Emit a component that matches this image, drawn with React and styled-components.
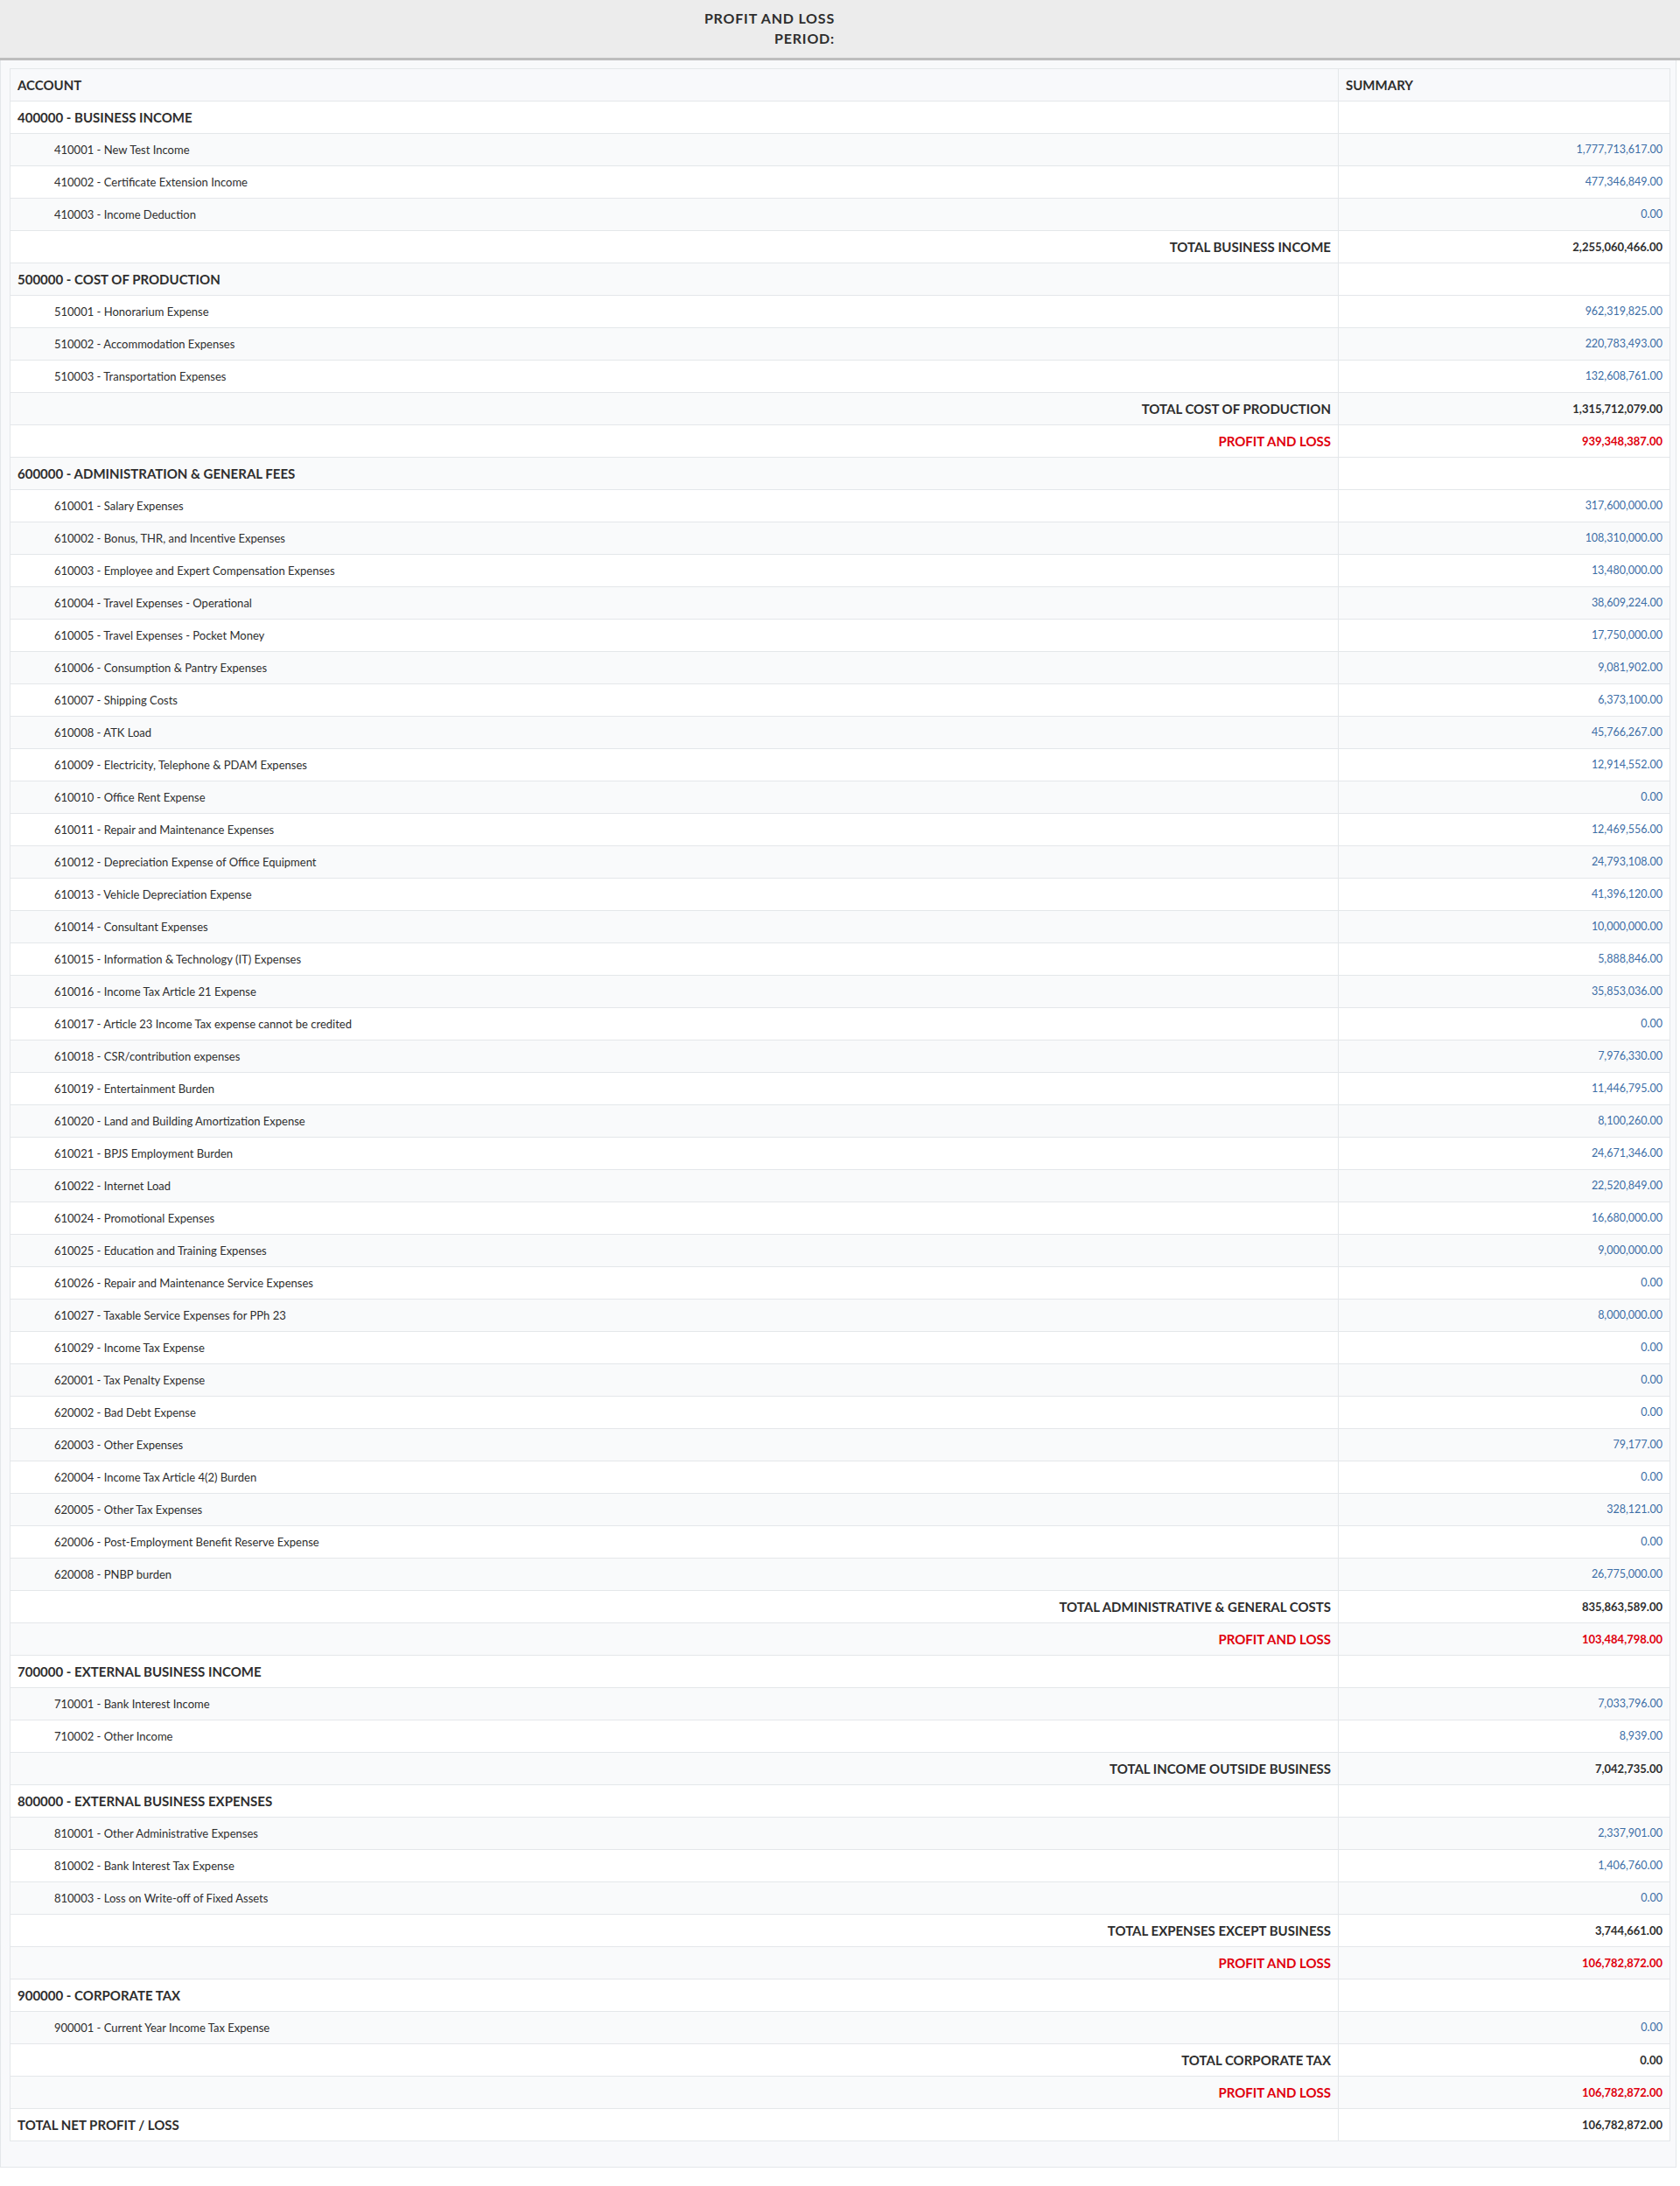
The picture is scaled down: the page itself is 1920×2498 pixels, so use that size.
import React from "react";
import styled, { createGlobalStyle } from "styled-components";

const GlobalStyle = createGlobalStyle`
  body {
    margin: 0;
    background: #ffffff;
    font-family: Lato, "Open Sans", sans-serif;
    color: #2e2e2e;
  }
`;

const TitleBar = styled.header`
  height: 66px;
  background-color: #ececec;
  border-bottom: 3px solid #bdbdbd;
  box-sizing: content-box;
  display: flex;
`;

const TitleBlock = styled.div`
  width: 50%;
  padding: 9px 6px 0 0;
  text-align: right;
  box-sizing: border-box;
`;

const TitleLine = styled.div`
  font-size: 16px;
  font-weight: 700;
  letter-spacing: 0.8px;
  line-height: 23px;
  color: #2e2e2e;
`;

const Panel = styled.section`
  margin-right: 4px;
  padding: 9px 6px 29px 10px;
  background-color: #f8f9fb;
  border: 1px solid #e4e7ea;
  border-top: none;
`;

const Table = styled.table`
  width: 100%;
  border-collapse: collapse;
  table-layout: fixed;
  border: 1px solid #e4e7ea;
`;

const Row = styled.tr`
  background-color: ${({ $striped }) => ($striped ? "#f9fafb" : "#ffffff")};
`;

const HeadRow = styled.tr`
  background-color: #f8f9fb;
`;

const Th = styled.th`
  padding: 8px;
  border: 1px solid #e4e7ea;
  text-align: left;
  font-size: 15px;
  font-weight: 700;
  line-height: 20px;
  color: #2e2e2e;
`;

const LabelCell = styled.td`
  padding: 8px 8px 8px ${({ $indent }) => ($indent ? "50px" : "8px")};
  border: 1px solid #e4e7ea;
  line-height: 20px;
  white-space: nowrap;
  text-align: ${({ $align }) => $align || "left"};
  font-size: ${({ $bold }) => ($bold ? "15px" : "13px")};
  font-weight: ${({ $bold }) => ($bold ? 700 : 400)};
  color: ${({ $red }) => ($red ? "#e0000d" : "#2e2e2e")};
`;

const ValueCell = styled.td`
  padding: 8px;
  border: 1px solid #e4e7ea;
  line-height: 20px;
  text-align: right;
  white-space: nowrap;
  background-color: ${({ $plain }) => ($plain ? "#ffffff" : "transparent")};
  font-size: ${({ $bold }) => ($bold ? "13px" : "12.5px")};
  font-weight: ${({ $bold }) => ($bold ? 700 : 400)};
  color: ${({ $tone }) =>
    $tone === "red" ? "#e0000d" : $tone === "blue" ? "#3d6ea6" : "#2e2e2e"};
`;

// kind: group | item | total | pl | net
const rows = [
  ["group", "400000 - BUSINESS INCOME"],
  ["item", "410001 - New Test Income", "1,777,713,617.00"],
  ["item", "410002 - Certificate Extension Income", "477,346,849.00"],
  ["item", "410003 - Income Deduction", "0.00"],
  ["total", "TOTAL BUSINESS INCOME", "2,255,060,466.00"],
  ["group", "500000 - COST OF PRODUCTION"],
  ["item", "510001 - Honorarium Expense", "962,319,825.00"],
  ["item", "510002 - Accommodation Expenses", "220,783,493.00"],
  ["item", "510003 - Transportation Expenses", "132,608,761.00"],
  ["total", "TOTAL COST OF PRODUCTION", "1,315,712,079.00"],
  ["pl", "PROFIT AND LOSS", "939,348,387.00"],
  ["group", "600000 - ADMINISTRATION & GENERAL FEES"],
  ["item", "610001 - Salary Expenses", "317,600,000.00"],
  ["item", "610002 - Bonus, THR, and Incentive Expenses", "108,310,000.00"],
  ["item", "610003 - Employee and Expert Compensation Expenses", "13,480,000.00"],
  ["item", "610004 - Travel Expenses - Operational", "38,609,224.00"],
  ["item", "610005 - Travel Expenses - Pocket Money", "17,750,000.00"],
  ["item", "610006 - Consumption & Pantry Expenses", "9,081,902.00"],
  ["item", "610007 - Shipping Costs", "6,373,100.00"],
  ["item", "610008 - ATK Load", "45,766,267.00"],
  ["item", "610009 - Electricity, Telephone & PDAM Expenses", "12,914,552.00"],
  ["item", "610010 - Office Rent Expense", "0.00"],
  ["item", "610011 - Repair and Maintenance Expenses", "12,469,556.00"],
  ["item", "610012 - Depreciation Expense of Office Equipment", "24,793,108.00"],
  ["item", "610013 - Vehicle Depreciation Expense", "41,396,120.00"],
  ["item", "610014 - Consultant Expenses", "10,000,000.00"],
  ["item", "610015 - Information & Technology (IT) Expenses", "5,888,846.00"],
  ["item", "610016 - Income Tax Article 21 Expense", "35,853,036.00"],
  ["item", "610017 - Article 23 Income Tax expense cannot be credited", "0.00"],
  ["item", "610018 - CSR/contribution expenses", "7,976,330.00"],
  ["item", "610019 - Entertainment Burden", "11,446,795.00"],
  ["item", "610020 - Land and Building Amortization Expense", "8,100,260.00"],
  ["item", "610021 - BPJS Employment Burden", "24,671,346.00"],
  ["item", "610022 - Internet Load", "22,520,849.00"],
  ["item", "610024 - Promotional Expenses", "16,680,000.00"],
  ["item", "610025 - Education and Training Expenses", "9,000,000.00"],
  ["item", "610026 - Repair and Maintenance Service Expenses", "0.00"],
  ["item", "610027 - Taxable Service Expenses for PPh 23", "8,000,000.00"],
  ["item", "610029 - Income Tax Expense", "0.00"],
  ["item", "620001 - Tax Penalty Expense", "0.00"],
  ["item", "620002 - Bad Debt Expense", "0.00"],
  ["item", "620003 - Other Expenses", "79,177.00"],
  ["item", "620004 - Income Tax Article 4(2) Burden", "0.00"],
  ["item", "620005 - Other Tax Expenses", "328,121.00"],
  ["item", "620006 - Post-Employment Benefit Reserve Expense", "0.00"],
  ["item", "620008 - PNBP burden", "26,775,000.00"],
  ["total", "TOTAL ADMINISTRATIVE & GENERAL COSTS", "835,863,589.00"],
  ["pl", "PROFIT AND LOSS", "103,484,798.00"],
  ["group", "700000 - EXTERNAL BUSINESS INCOME"],
  ["item", "710001 - Bank Interest Income", "7,033,796.00"],
  ["item", "710002 - Other Income", "8,939.00"],
  ["total", "TOTAL INCOME OUTSIDE BUSINESS", "7,042,735.00"],
  ["group", "800000 - EXTERNAL BUSINESS EXPENSES"],
  ["item", "810001 - Other Administrative Expenses", "2,337,901.00"],
  ["item", "810002 - Bank Interest Tax Expense", "1,406,760.00"],
  ["item", "810003 - Loss on Write-off of Fixed Assets", "0.00"],
  ["total", "TOTAL EXPENSES EXCEPT BUSINESS", "3,744,661.00"],
  ["pl", "PROFIT AND LOSS", "106,782,872.00"],
  ["group", "900000 - CORPORATE TAX"],
  ["item", "900001 - Current Year Income Tax Expense", "0.00"],
  ["total", "TOTAL CORPORATE TAX", "0.00"],
  ["pl", "PROFIT AND LOSS", "106,782,872.00"],
  ["net", "TOTAL NET PROFIT / LOSS", "106,782,872.00"],
];

function ReportRow({ kind, label, value, index }) {
  const striped = index % 2 === 1;
  const isItem = kind === "item";
  const rightLabel = kind === "total" || kind === "pl";
  const tone = kind === "pl" ? "red" : isItem ? "blue" : "dark";
  return (
    <Row $striped={striped}>
      <LabelCell
        $indent={isItem}
        $bold={!isItem}
        $red={kind === "pl"}
        $align={rightLabel ? "right" : "left"}
      >
        {label}
      </LabelCell>
      <ValueCell $bold={!isItem} $tone={tone} $plain={kind === "group"}>
        {value}
      </ValueCell>
    </Row>
  );
}

export default function App() {
  return (
    <>
      <GlobalStyle />
      <TitleBar>
        <TitleBlock>
          <TitleLine>PROFIT AND LOSS</TitleLine>
          <TitleLine>PERIOD:</TitleLine>
        </TitleBlock>
      </TitleBar>
      <Panel>
        <Table>
          <colgroup>
            <col />
            <col style={{ width: "379px" }} />
          </colgroup>
          <thead>
            <HeadRow>
              <Th>ACCOUNT</Th>
              <Th>SUMMARY</Th>
            </HeadRow>
          </thead>
          <tbody>
            {rows.map(([kind, label, value], i) => (
              <ReportRow key={i} kind={kind} label={label} value={value} index={i} />
            ))}
          </tbody>
        </Table>
      </Panel>
    </>
  );
}
